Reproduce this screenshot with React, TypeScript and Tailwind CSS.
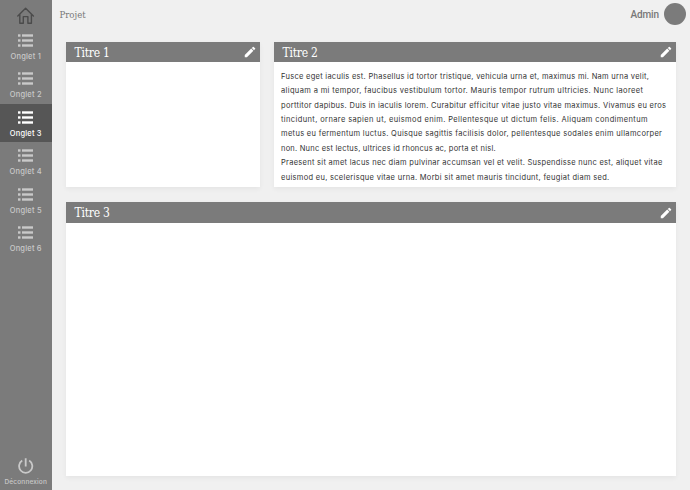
import type { ReactNode } from 'react';
import { MdEdit } from 'react-icons/md';

const tabs = ['Onglet 1', 'Onglet 2', 'Onglet 3', 'Onglet 4', 'Onglet 5', 'Onglet 6'];

const lines = [
  { text: 'Fusce eget iaculis est. Phasellus id tortor tristique, vehicula urna et, maximus mi. Nam urna velit,', style: 'tracking-[0.277px]' },
  { text: 'aliquam a mi tempor, faucibus vestibulum tortor. Mauris tempor rutrum ultricies. Nunc laoreet', style: 'tracking-[0.358px]' },
  { text: 'porttitor dapibus. Duis in iaculis lorem. Curabitur efficitur vitae justo vitae maximus. Vivamus eu eros', style: 'tracking-[0.295px]' },
  { text: 'tincidunt, ornare sapien ut, euismod enim. Pellentesque ut dictum felis. Aliquam condimentum', style: 'tracking-[0.383px]' },
  { text: 'metus eu fermentum luctus. Quisque sagittis facilisis dolor, pellentesque sodales enim ullamcorper', style: 'tracking-[0.327px]' },
  { text: 'non. Nunc est lectus, ultrices id rhoncus ac, porta et nisl.', style: 'tracking-[0.22px]' },
  { text: 'Praesent sit amet lacus nec diam pulvinar accumsan vel et velit. Suspendisse nunc est, aliquet vitae', style: 'tracking-[0.285px]' },
  { text: 'euismod eu, scelerisque vitae urna. Morbi sit amet mauris tincidunt, feugiat diam sed.', style: 'tracking-[0.3px]' },
];

function ListIcon() {
  return (
    <svg width="15" height="13" viewBox="0 0 15 13" fill="currentColor">
      {[0.3, 5.3, 10.3].map((y) => (
        <g key={y}>
          <rect x="0" y={y} width="2.5" height="2.4" />
          <rect x="4" y={y} width="11" height="2.4" />
        </g>
      ))}
    </svg>
  );
}

function HomeIcon() {
  return (
    <svg width="18" height="18" viewBox="0 0 18 18" fill="none" stroke="#4b4b4b" strokeWidth="1.4" strokeLinejoin="round" strokeLinecap="round">
      <path d="M.8 9 8.6 1.2 16.4 9M2.8 7.6v8.6h3.5V9.6h4.6v6.6h3.5V7.6" />
    </svg>
  );
}

function PowerIcon() {
  return (
    <svg width="16" height="16" viewBox="0 0 16 16" fill="none" stroke="currentColor" strokeWidth="1.8">
      <path d="M7.7.3v8.2M4.2 2.6a6.6 6.6 0 1 0 7 0" />
    </svg>
  );
}

function Card({ title, className, children }: { title: string; className: string; children?: ReactNode }) {
  return (
    <section className={`bg-white shadow-[0_2px_5px_rgba(0,0,0,0.05)] ${className}`}>
      <header className="flex h-[20.3px] items-center justify-between bg-[#7b7b7b] pl-[9px] pr-[3px] text-white">
        <h2 className="pt-px font-['DejaVu_Serif',serif] text-[12px] leading-5 tracking-[-0.25px] font-stretch-condensed">{title}</h2>
        <MdEdit size={14} />
      </header>
      {children}
    </section>
  );
}

export default function App() {
  return (
    <div className="flex h-[490px] w-[690px] overflow-hidden bg-[#f0f0f0] font-['Inter','Open_Sans',sans-serif]">
      <nav className="flex w-[51.5px] shrink-0 flex-col items-center bg-[#7b7b7b] text-[#c9c9c9]">
        <div className="flex h-[27px] w-full shrink-0 justify-center pt-[7px]">
          <HomeIcon />
        </div>
        {tabs.map((tab, i) => (
          <div key={tab} className={`flex h-[38.4px] w-full shrink-0 flex-col items-center pt-[7px] ${i === 2 ? 'bg-[#565656] text-white' : ''}`}>
            <ListIcon />
            <span className="mt-[5px] text-[7.5px] font-medium leading-[10px] tracking-[0.2px]">{tab}</span>
          </div>
        ))}
        <div className="mt-auto flex flex-col items-center pb-[3px]">
          <PowerIcon />
          <span className="mt-[4px] whitespace-nowrap text-[6.5px] font-medium leading-[9px] tracking-[0.15px]">Déconnexion</span>
        </div>
      </nav>
      <div className="flex min-w-0 flex-1 flex-col">
        <header className="flex h-[28px] items-center justify-between pl-[8px] pr-[4px]">
          <h1 className="pt-[2px] font-['DejaVu_Serif',serif] text-[9.5px] text-[#777] font-stretch-condensed">Projet</h1>
          <div className="flex items-center gap-[5px]">
            <span className="font-['Roboto',sans-serif] text-[10px] font-medium tracking-[-0.1px] text-[#777]">Admin</span>
            <div className="size-[22px] rounded-full bg-[#7b7b7b]" />
          </div>
        </header>
        <main className="flex flex-col gap-[15px] pl-[14px] pt-[14px]">
          <div className="flex gap-[14px]">
            <Card title="Titre 1" className="h-[145.4px] w-[194px]" />
            <Card title="Titre 2" className="h-[145.4px] w-[402px]">
              <div className="pl-[7.5px] pt-[7.3px] text-[7.5px] leading-[14.45px] text-[#333]">
                {lines.map((line) => (
                  <div key={line.text} className={`whitespace-nowrap ${line.style}`}>{line.text}</div>
                ))}
              </div>
            </Card>
          </div>
          <Card title="Titre 3" className="h-[273.5px] w-[610px]" />
        </main>
      </div>
    </div>
  );
}
